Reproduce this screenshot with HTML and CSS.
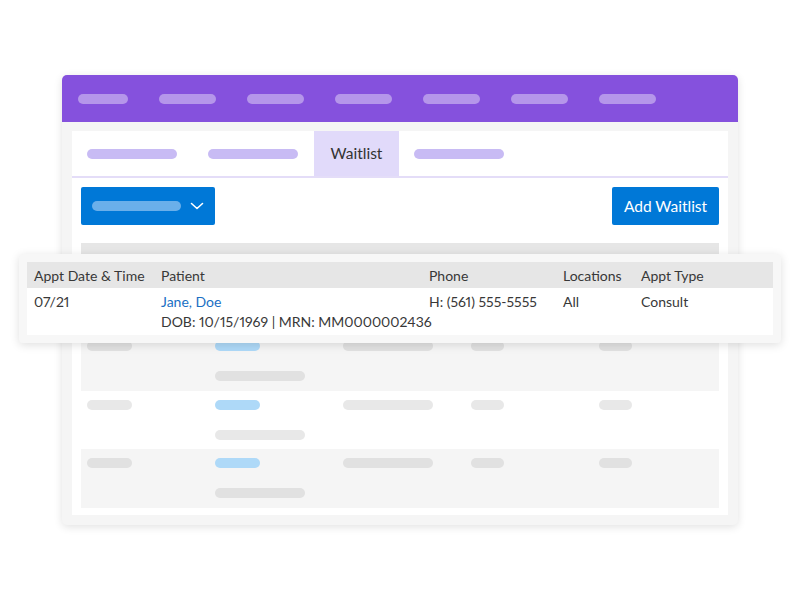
FILE: index.html
```html
<!DOCTYPE html>
<html>
<head>
<meta charset="utf-8">
<link rel="stylesheet" href="styles.css">
</head>
<body>
<div class="stage">
  <div class="window">
    <div class="topbar">
      <span class="tpill first"></span>
      <span class="tpill"></span>
      <span class="tpill"></span>
      <span class="tpill"></span>
      <span class="tpill"></span>
      <span class="tpill"></span>
      <span class="tpill"></span>
    </div>
    <div class="body">
      <div class="panel">
        <div class="tabs">
          <div class="tab"><span class="tabpill"></span></div>
          <div class="tab"><span class="tabpill"></span></div>
          <div class="tab active">Waitlist</div>
          <div class="tab"><span class="tabpill"></span></div>
        </div>
        <div class="toolbar">
          <div class="dropdown">
            <span class="ddpill"></span>
            <svg class="chev" width="14" height="8" viewBox="0 0 14 8"><polyline points="1.5,1.5 7,6.5 12.5,1.5" fill="none" stroke="#fff" stroke-width="1.6" stroke-linecap="round" stroke-linejoin="round"/></svg>
          </div>
          <div class="addbtn">Add Waitlist</div>
        </div>
        <div class="sktable">
          <div class="skhead"></div>
          <div class="skrow white">
            <div class="skcell"><span class="sp w45"></span></div>
            <div class="skcell"><span class="sp w45 blue"></span><span class="sp w90"></span></div>
            <div class="skcell"><span class="sp w90"></span></div>
            <div class="skcell"><span class="sp w33"></span></div>
            <div class="skcell"><span class="sp w33"></span></div>
          </div>
          <div class="skrow grey">
            <div class="skcell"><span class="sp w45"></span></div>
            <div class="skcell"><span class="sp w45 blue"></span><span class="sp w90"></span></div>
            <div class="skcell"><span class="sp w90"></span></div>
            <div class="skcell"><span class="sp w33"></span></div>
            <div class="skcell"><span class="sp w33"></span></div>
          </div>
          <div class="skrow white">
            <div class="skcell"><span class="sp w45"></span></div>
            <div class="skcell"><span class="sp w45 blue"></span><span class="sp w90"></span></div>
            <div class="skcell"><span class="sp w90"></span></div>
            <div class="skcell"><span class="sp w33"></span></div>
            <div class="skcell"><span class="sp w33"></span></div>
          </div>
          <div class="skrow grey">
            <div class="skcell"><span class="sp w45"></span></div>
            <div class="skcell"><span class="sp w45 blue"></span><span class="sp w90"></span></div>
            <div class="skcell"><span class="sp w90"></span></div>
            <div class="skcell"><span class="sp w33"></span></div>
            <div class="skcell"><span class="sp w33"></span></div>
          </div>
        </div>
      </div>
    </div>
  </div>

  <div class="card">
    <div class="grid head">
      <div class="c">Appt Date &amp; Time</div>
      <div class="c">Patient</div>
      <div class="c">Phone</div>
      <div class="c">Locations</div>
      <div class="c">Appt Type</div>
    </div>
    <div class="grid row">
      <div class="c">07/21</div>
      <div class="c"><a class="link">Jane, Doe</a><br>DOB: 10/15/1969 | MRN: MM0000002436</div>
      <div class="c">H: (561) 555-5555</div>
      <div class="c">All</div>
      <div class="c">Consult</div>
    </div>
  </div>
</div>
</body>
</html>
```
FILE: styles.css
```css
* { box-sizing: border-box; }
html, body { margin: 0; padding: 0; background: #fff; }
body { font-family: Lato, "Noto Sans", sans-serif; color: #333; }

.stage { position: relative; width: 800px; height: 600px; padding-top: 75px; padding-left: 62px; }

.window {
  width: 676px; height: 450px;
  background: #f5f5f5;
  border-radius: 5px;
  overflow: hidden;
  box-shadow: 0 2px 8px rgba(0,0,0,0.12);
  display: flex; flex-direction: column;
}
.topbar {
  height: 47px; background: #8551dd;
  display: flex; align-items: center;
  padding-left: 16px; gap: 31px;
  flex: none;
}
.tpill { width: 57px; height: 10px; border-radius: 5px; background: #b596ea; display: block; }
.tpill.first { width: 50px; }

.body { flex: 1; padding: 9px 10px 10px; display: flex; }
.panel { flex: 1; background: #fff; display: flex; flex-direction: column; }

.tabs { height: 47px; display: flex; border-bottom: 2px solid #e4ddf8; flex: none; }
.tab { padding: 0 16px 0 15px; display: flex; align-items: center; font-size: 15px; color: #333; }
.tab.active { background: #e1dafa; padding: 0 0 2px; width: 85px; justify-content: center; font-size: 15.5px; }
.tabpill { width: 90px; height: 10px; border-radius: 5px; background: #c8bbf4; display: block; }

.toolbar { display: flex; justify-content: space-between; padding: 9px 9px 0; flex: none; }
.dropdown {
  width: 134px; height: 38px; background: #0078d7; border-radius: 2px;
  display: flex; align-items: center; padding-left: 11px; gap: 9px;
}
.ddpill { width: 89px; height: 10px; border-radius: 5px; background: #6aafea; display: block; }
.chev { display: block; }
.addbtn {
  height: 38px; width: 107px; justify-content: center; background: #0078d7; border-radius: 2px;
  color: #fff; font-size: 15.5px; display: flex; align-items: center;
}

.sktable { margin: 18px 9px 0; display: flex; flex-direction: column; }
.skhead { height: 31px; background: #e6e6e6; }
.skrow { height: 58px; display: grid; grid-template-columns: 128px 128px 128px 128px 1fr; padding-top: 9px; }
.skrow.white { background: #fff; }
.skrow.grey { background: #f5f5f5; height: 59px; }
.skcell { padding-left: 6px; display: flex; flex-direction: column; gap: 20px; }
.sp { display: block; height: 10px; border-radius: 5px; background: #e8e8e8; }
.grey .sp { background: #e1e1e1; }
.sp.blue, .grey .sp.blue { background: #aed9f8; }
.w45 { width: 45px; }
.w90 { width: 90px; }
.w33 { width: 33px; }

.card {
  position: absolute; left: 19px; top: 254px; width: 762px;
  background: #f7f7f7; padding: 8px; border-radius: 4px;
  box-shadow: 0 2px 10px rgba(0,0,0,0.13);
}
.grid { display: grid; grid-template-columns: 127px 268px 134px 78px 1fr; font-size: 14px; color: #383838; font-variant-numeric: proportional-nums; }
.grid .c { padding-left: 7px; white-space: nowrap; }
.head { background: #e6e6e6; height: 26px; align-items: center; }
.row { background: #fff; height: 47px; padding-top: 4px; line-height: 20px; }
.link { color: #1a6fc4; text-decoration: none; }
```
